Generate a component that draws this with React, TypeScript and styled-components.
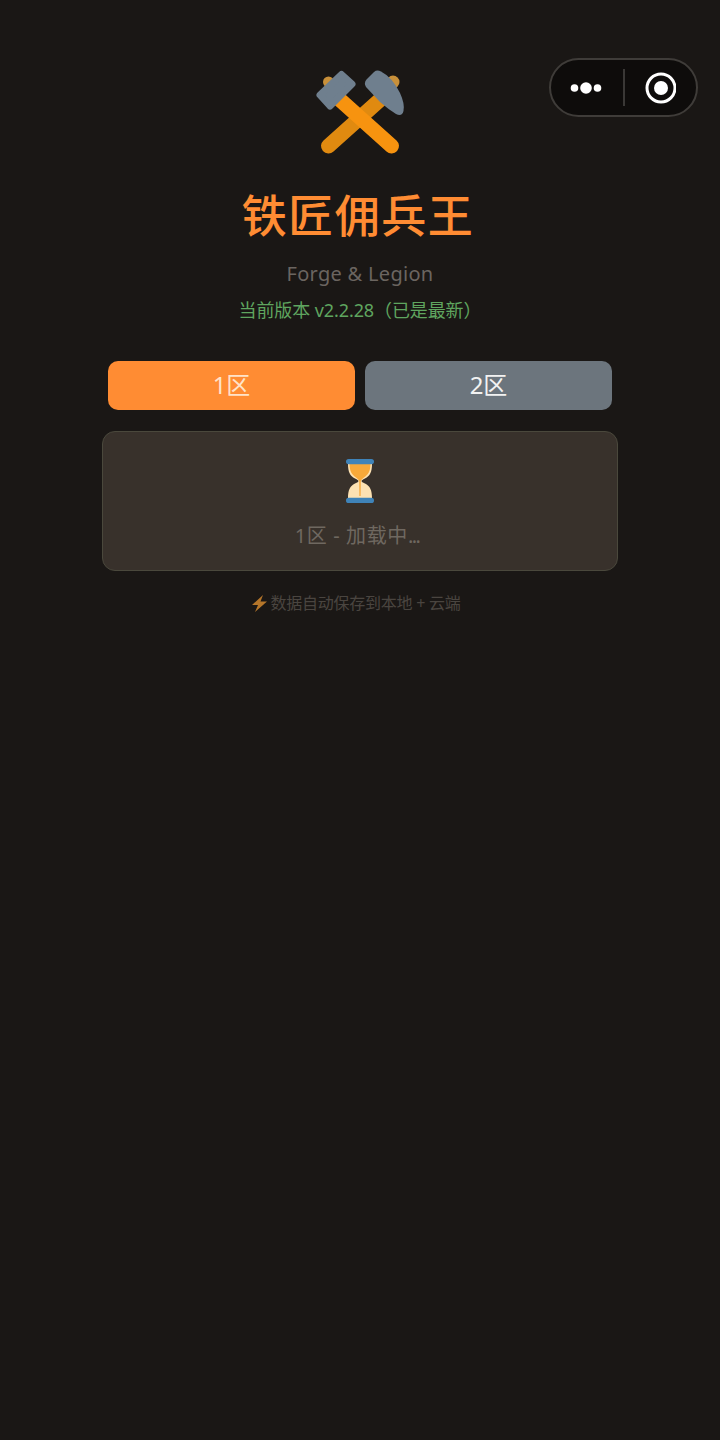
import React from "react";
import styled, { createGlobalStyle } from "styled-components";

const Global = createGlobalStyle`
  html, body { margin: 0; padding: 0; background: #1a1715; }
  body { font-family: "Noto Sans", "Noto Sans CJK SC", sans-serif; }
`;
const Page = styled.div`
  position: relative;
  width: 720px;
  height: 1440px;
  box-sizing: border-box;
  padding: 60px 102px 0;
  display: flex;
  flex-direction: column;
  align-items: center;
  background: #1a1715;
  overflow: hidden;
`;
const Capsule = styled.div`
  position: absolute;
  left: 549px;
  top: 58px;
  width: 149px;
  height: 59px;
  box-sizing: border-box;
  border: 2px solid #3f3c39;
  border-radius: 30px;
  background: #0e0c0b;
  display: flex;
  align-items: center;
`;
const CapsuleCell = styled.div`
  flex: 1;
  height: 100%;
  display: flex;
  align-items: center;
  justify-content: center;
`;
const CapsuleDivider = styled.div`
  width: 2px;
  height: 37px;
  background: #3a3836;
`;
const Logo = styled.svg`
  width: 100px;
  height: 100px;
  display: block;
`;
const Title = styled.h1`
  margin: 28px 0 0;
  padding-right: 4px;
  font-size: 45px;
  line-height: 52px;
  font-weight: 500;
  letter-spacing: 1.5px;
  color: #ff8c33;
  font-family: "Noto Sans CJK SC", sans-serif;
`;
const Subtitle = styled.div`
  margin-top: 20px;
  font-size: 20px;
  line-height: 28px;
  letter-spacing: 0.3px;
  color: #6b6560;
`;
const Version = styled.div`
  margin-top: 9px;
  font-size: 18px;
  line-height: 26px;
  letter-spacing: -0.1px;
  color: #5fa55f;
`;
const Tabs = styled.div`
  margin-top: 38px;
  width: 504px;
  display: grid;
  grid-template-columns: 1fr 1fr;
  gap: 10px;
`;
const Tab = styled.div<{ $active?: boolean }>`
  height: 49px;
  box-sizing: border-box;
  padding-bottom: 4px;
  border-radius: 10px;
  background: ${(p) => (p.$active ? "#ff8c33" : "#6c757d")};
  color: ${(p) => (p.$active ? "#ffe3c8" : "#f2f2f2")};
  font-size: 24px;
  display: flex;
  align-items: center;
  justify-content: center;
`;
const Card = styled.div`
  margin-top: 21px;
  width: 516px;
  height: 140px;
  box-sizing: border-box;
  border: 1.5px solid #4a483c;
  border-radius: 13px;
  background: #38312b;
  display: flex;
  flex-direction: column;
  align-items: center;
  padding-top: 26.5px;
`;
const Hourglass = styled.svg`
  width: 44px;
  height: 44px;
  display: block;
`;
const Loading = styled.div`
  margin-top: 19px;
  padding-right: 6px;
  font-size: 20px;
  line-height: 28px;
  letter-spacing: 0.6px;
  color: #6f6860;
`;
const Dots = styled.span`
  letter-spacing: -1.6px;
`;
const Footer = styled.div`
  margin-top: 20px;
  padding-right: 10px;
  font-size: 16px;
  line-height: 24px;
  letter-spacing: -0.25px;
  color: #4a4540;
  display: flex;
  align-items: center;
  gap: 2px;
`;
const Bolt = styled.svg`
  width: 19px;
  height: 19px;
  display: block;
`;

export default function App() {
  return (
    <Page>
      <Global />
      <Capsule>
        <CapsuleCell>
          <svg width="34" height="14" viewBox="0 0 34 14">
            <circle cx="4.500" cy="7" r="3.800" fill="#fff" />
            <circle cx="16" cy="7" r="5.800" fill="#fff" />
            <circle cx="27.500" cy="7" r="3.800" fill="#fff" />
          </svg>
        </CapsuleCell>
        <CapsuleDivider />
        <CapsuleCell>
          <svg width="32" height="32" viewBox="0 0 32 32">
            <circle cx="17" cy="16" r="14" fill="none" stroke="#fff" strokeWidth="3" />
            <circle cx="17" cy="16" r="7" fill="#fff" />
          </svg>
        </CapsuleCell>
      </Capsule>

      <Logo viewBox="0 0 100 100">
        <circle cx="18.500" cy="22" r="5.500" fill="#c8903a" />
        <circle cx="83" cy="22" r="6.500" fill="#c8903a" />
        <line x1="72" y1="38" x2="18.500" y2="86" stroke="#e08a10" strokeWidth="15" strokeLinecap="round" />
        <line x1="28" y1="38" x2="81.500" y2="86" stroke="#f7930f" strokeWidth="15" strokeLinecap="round" />
        <path d="M31.500 14.500 L42 24 L20 46 L10 35 Z" fill="#6f7f8e" stroke="#6f7f8e" strokeWidth="7" strokeLinejoin="round" />
        <path d="M56.500 19.500 L64 12 Q67 9.500 71 11.500 Q82 17 90 33 Q95 44 93.500 51 Q92 57 86 54 Q78 49 70 42 L56 27 Q53.500 23 56.500 19.500 Z" fill="#6f7f8e" />
      </Logo>

      <Title>铁匠佣兵王</Title>
      <Subtitle>Forge &amp; Legion</Subtitle>
      <Version>当前版本 v2.2.28（已是最新）</Version>

      <Tabs>
        <Tab $active>1区</Tab>
        <Tab>2区</Tab>
      </Tabs>

      <Card>
        <Hourglass viewBox="0 0 44 44">
          <path d="M10 5 C10 13 12 17 17 19.500 Q20.500 21 20.500 22 Q20.500 23 17 24.500 C12 27 10 31 10 39 L34 39 C34 31 32 27 27 24.500 Q23.500 23 23.500 22 Q23.500 21 27 19.500 C32 17 34 13 34 5 Z" fill="#fde2b3" />
          <path d="M11.500 5 L32.500 5 C32.500 12 30 16 26 18.500 Q23 20.500 22.800 22 L22.600 37 L21.400 37 L21.200 22 Q21 20.500 18 18.500 C14 16 11.500 12 11.500 5 Z" fill="#f7a93a" />
          <rect x="8" y="0" width="28" height="5.200" rx="2.600" fill="#3f83b8" />
          <rect x="8" y="38.800" width="28" height="5.200" rx="2.600" fill="#3f83b8" />
        </Hourglass>
        <Loading>1区 - 加载中<Dots>...</Dots></Loading>
      </Card>

      <Footer>
        <Bolt viewBox="0 0 19 19">
          <path d="M13 1 L2 11 L8 11 L5 18 L17 7.500 L10.500 7.500 Z" fill="#b5762a" />
        </Bolt>
        数据自动保存到本地 + 云端
      </Footer>
    </Page>
  );
}
